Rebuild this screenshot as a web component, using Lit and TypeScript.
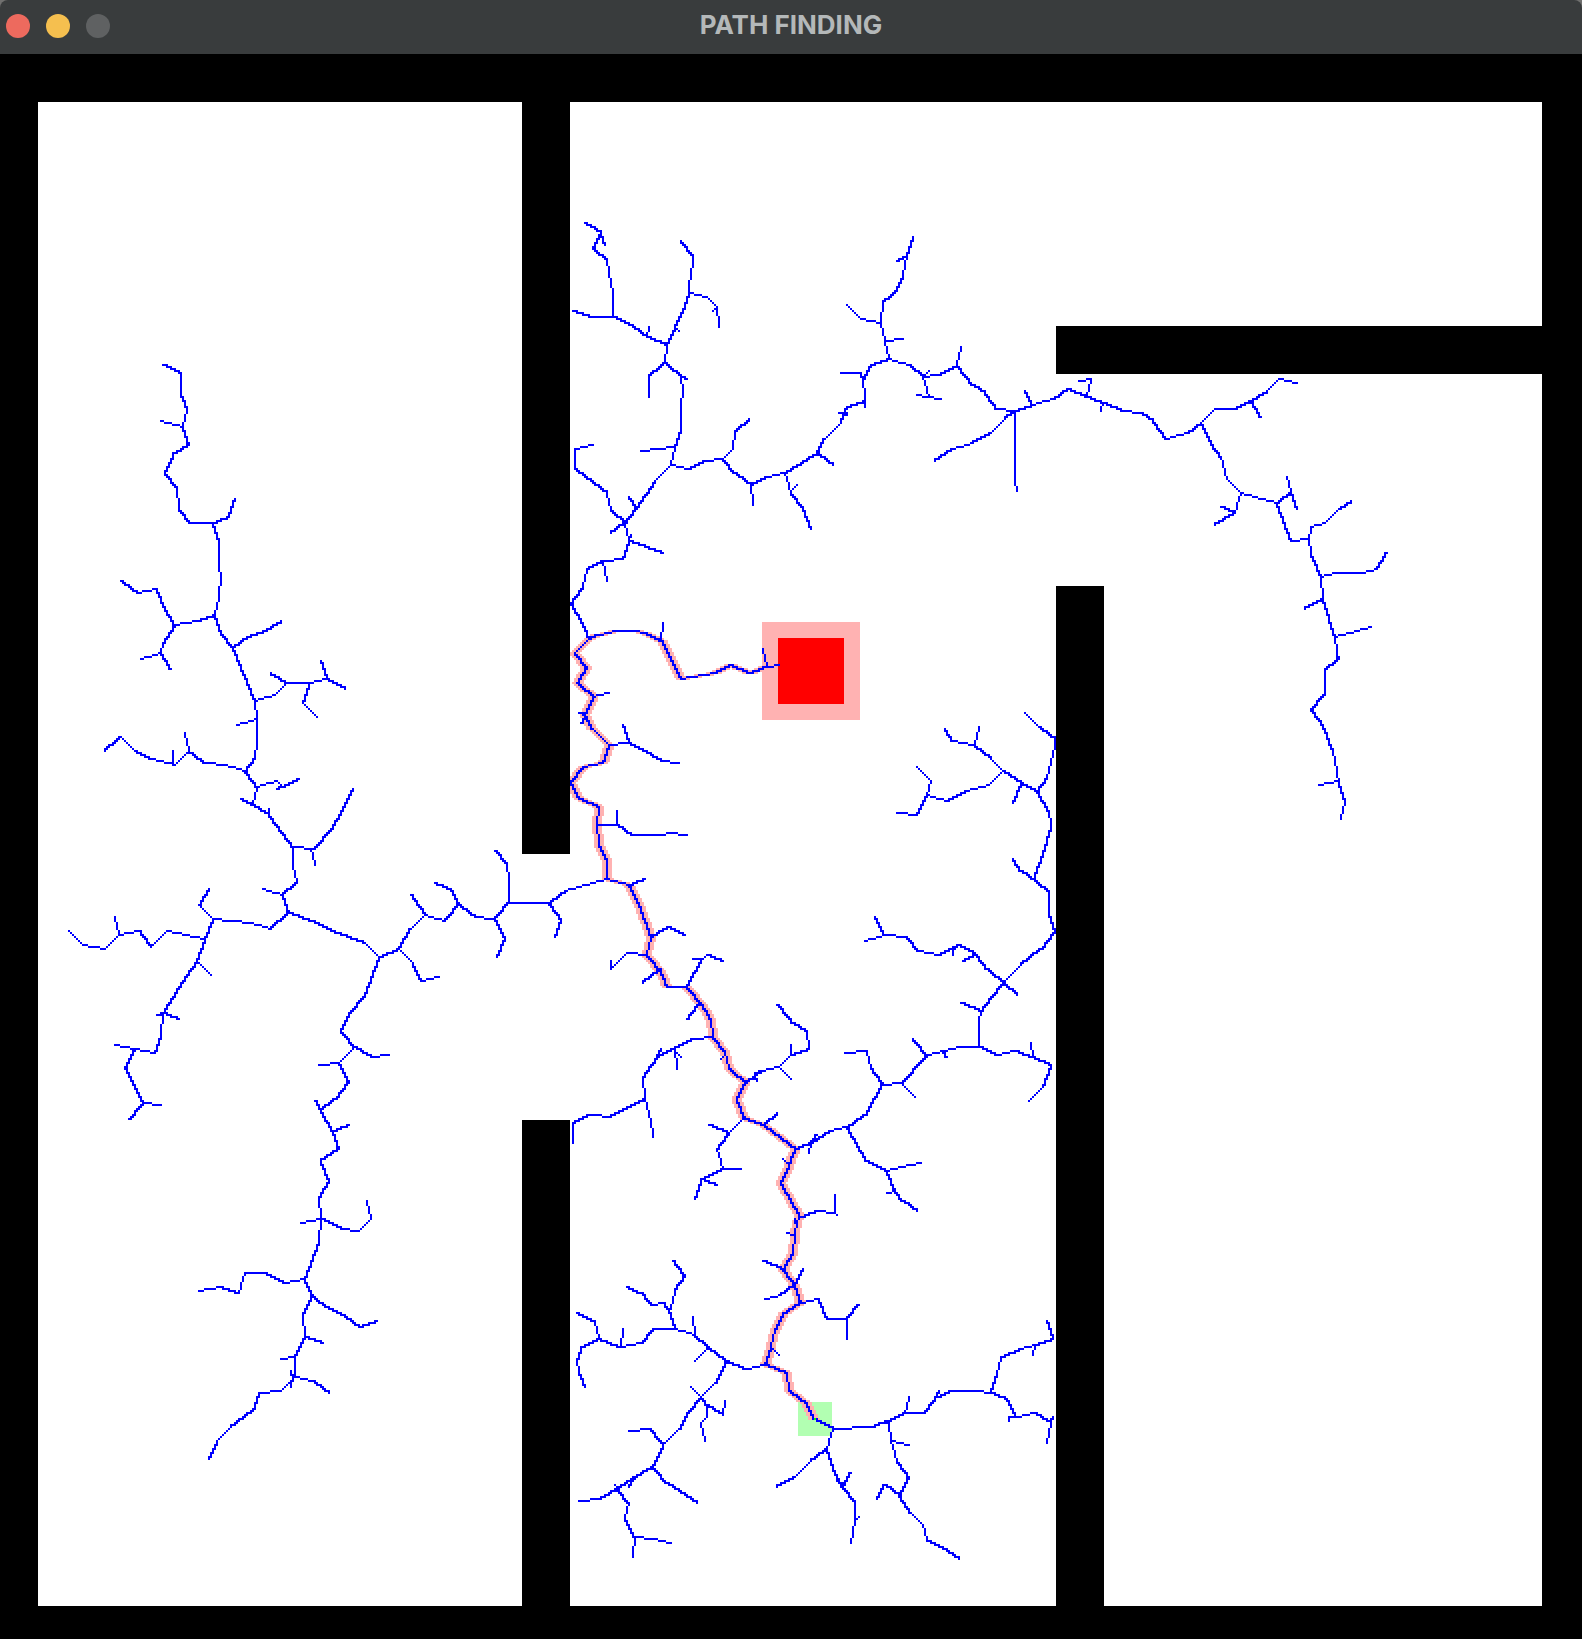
import { LitElement, html, svg, css } from "lit";
import { customElement, property } from "lit/decorators.js";

type Point = [number, number];

interface Tile {
  x: number;
  y: number;
  /** Units per pixel on each axis. */
  sx: number;
  sy: number;
  /** Branches of the tree, one per line, as "x,y x,y ...". */
  branches: string;
}

/** Side of one simulation cell, in scene units. */
const CELL = 2;

const TREE: Tile[] = [
  {
    x: 560, y: 210, sx: 3, sy: 3,
    branches: `
75,39 99,51 121,69 96,114 141,153 147,186 159,249 159,321
121,69 135,105
39,302 93,321 162,321 215,345 261,381 321,405
261,381 267,350
363,93 399,135 399,160 387,225 387,249 375,285 345,351 321,405 315,459
345,351 357,363
387,249 440,261 471,291 477,351
471,291 459,303
315,459 267,501 267,561
315,459 363,498 381,507
363,498 369,550 363,580 363,657 345,711 333,765
243,723 345,711
333,765 387,777 435,753 489,747 525,790 573,825 579,885
489,747 519,717 525,663 567,627
573,825 620,800 675,790 720,760 771,729 795,685 840,640 855,609 861,591 915,573
837,609 861,609 861,615
915,591 915,549 909,510 933,465 987,447
843,489 903,489 909,507
771,729 819,765
675,790 693,850 729,891 753,957
693,843 711,825
333,765 285,810 231,891 192,939
207,861 228,891
192,939 153,969
99,705 45,717 45,777 141,849 150,903 192,939
192,939 204,995 186,1045 129,1054 81,1077 66,1130 33,1179
204,989 210,975
204,995 309,1029
129,1054 141,1113`,
  },
  {
    x: 840, y: 220, sx: 3, sy: 3,
    branches: `
219,51 201,105 189,165 165,219 129,249 123,309 135,360 147,417
171,123 201,105 201,117
21,255 63,297 123,309
135,363 189,357
147,417 207,435 249,471 297,462 351,437 363,381
249,471 267,453
249,471 267,531
231,525 303,537
351,437 400,493 435,519 471,566 525,573
525,573 495,595 450,637 400,667 339,687 285,723
525,573 525,783 531,813
525,573 579,552 636,537 681,507 740,530 789,549 850,570 900,580 940,603 981,657
555,513 579,552
741,525 753,477 717,483
789,549 783,573`,
  },
  {
    x: 1050, y: 370, sx: 3, sy: 3,
    branches: `
351,207 408,186 453,161 493,117 553,117 600,93 650,60 685,27 741,39
600,93 633,141
453,161 495,237 513,261 531,327 573,369 681,399
573,369 552,427 495,465
513,411 552,427
681,399 721,363 711,321
721,363 741,417
681,399 720,513 777,507 783,471 825,460 865,416 903,393
777,507 783,549 813,621 819,684 855,800 861,850 867,865 825,903 825,969 780,1014 819,1062 849,1140 867,1237 885,1290 873,1347
813,621 860,609 938,607 978,598 1011,549
819,684 765,717
855,800 903,791 963,771
867,1234 807,1245`,
  },
  {
    x: 560, y: 590, sx: 3, sy: 3,
    branches: `
33,39 69,100 84,147
309,98 303,150
609,177 621,231
96,321 147,309
57,369 75,372
75,378 63,399
149,465 204,460 189,405
204,460 245,477 300,512 357,519
111,705 168,705 171,662
168,705 215,735 300,735 330,729 381,735
205,885 255,867
273,1040 321,1011 375,1034
258,1095 198,1089 153,1135 153,1113
300,1137 249,1179
381,1191 430,1107 438,1095 489,1113
399,1107 430,1107`,
  },
  {
    x: 780, y: 700, sx: 3, sy: 3,
    branches: `
735,39 777,78 825,117 825,140 813,190 798,230 771,270
495,87 520,123 579,132 630,175 669,211 720,250 771,270
597,81 582,132
411,201 453,243 441,285 501,300 560,273 627,252 669,211
441,285 411,345 351,339
720,250 699,309
771,270 807,330 813,380 789,460 765,525 762,540
699,477 720,512 762,543 807,579 807,640 825,690 780,745 720,795 669,846
285,651 312,703 255,723
312,703 378,712 417,752 477,765 531,736 582,760 620,805 669,846
525,740 519,765
582,763 549,783
669,846 711,885
669,846 630,888 603,930 597,965 597,1041
543,909 603,930
597,1041 651,1064 705,1052 755,1070 813,1095 789,1160 747,1203
753,1029 759,1070
597,1041 540,1041 490,1055 438,1065 363,1148 309,1155 273,1105 258,1053 195,1059
490,1055 501,1071
399,1017 438,1065
363,1148 405,1191`,
  },
  {
    x: 560, y: 940, sx: 3, sy: 3,
    branches: `
459,291 399,297 345,327 291,351 249,408 255,474 150,529 93,523 39,549 39,609
291,351 303,327
345,327 351,387
345,330 363,351
255,474 273,540 279,591
483,354 495,345
417,190 381,237
555,430 600,393 657,380 690,342 747,327 741,270 690,243 651,195
600,393 582,405 591,423
657,380 693,417
693,315 693,342
549,537 507,579 471,624 489,687 425,720 405,777
447,555 507,579
489,687 543,687
435,720 471,735
611,552 651,519
705,627 753,609 805,575 863,562 918,520 969,435
753,609 747,639
753,609 771,585
863,562 921,665 978,690 1003,750 1030,785 1071,813
978,690 1020,678 1083,669
1003,750 981,759
669,657 687,675
720,828 771,813 825,820 825,765
825,820 831,825
705,837 705,849
681,879 703,885
609,963 666,984
729,987 705,1035 660,1062 615,1077`,
  },
  {
    x: 560, y: 1240, sx: 3, sy: 3,
    branches: `
720,186 777,177 801,237 861,237 897,195
861,237 861,297
633,320 657,345
615,374 561,387 498,365 447,321 405,285 345,267 280,267 243,309 180,321 117,297 105,240 51,219
117,297 60,324 51,360 54,393 75,441
180,321 189,267
399,231 405,285
447,321 405,363
345,267 327,210 306,189 270,195 240,156 201,141
332,205 345,155 375,111 339,63
498,365 465,430 423,471 385,513 355,567 306,612 276,678 168,747 120,776 57,783
393,441 423,471 441,495 487,522 495,483
441,495 441,530 423,550 435,603
306,612 267,567 207,573
276,678 320,727 411,789
219,711 207,741
168,747 207,790 195,835 225,890 219,951
165,735 177,747
225,890 285,896 333,909
765,537 819,567 935,561 981,545 1035,519 1095,516 1131,471 1175,453 1255,453 1290,459 1341,477 1368,528 1425,519 1473,546 1463,609
1368,528 1347,531 1347,543
1473,546 1479,531
1290,459 1308,405 1323,351 1380,325 1425,315 1479,297 1461,243
1425,315 1419,345
1035,519 1047,471
1131,471 1137,453
819,567 801,627 825,700 849,740 885,785 885,840 873,909
801,627 750,660 702,711 651,741
831,723 849,735
849,740 873,699
885,840 897,831
981,545 987,555 993,603 1012,665 1047,711 1017,765
993,603 1047,615
951,777 975,737 1017,765 1053,821 1089,857 1098,905 1140,923 1197,957`,
  },
  {
    x: 50, y: 350, sx: 3, sy: 3,
    branches: `
339,45 393,69 393,130 411,177 396,231 417,285 370,315 345,371 381,411 387,475 423,519 487,519
333,213 396,231
487,519 537,501 555,447
487,519 507,570 507,650 513,680 507,740 495,792
213,693 261,729 321,717 345,775 375,825 440,810 495,792
375,825 339,878 333,909 273,927
333,909 363,957
495,792 510,848 546,888 590,860 645,843 693,813
546,888 615,1052 621,1107 621,1185 615,1219 585,1263
615,1052 675,1034 711,999 663,969
711,999 783,999 830,987 885,1017
830,987 813,933
777,1003 759,1059 801,1101
621,1107 561,1125
585,1263 525,1245 462,1238 417,1200 405,1149
417,1200 372,1244 300,1229 255,1200 210,1160 165,1203
369,1203 369,1244
585,1263 621,1309 679,1293 697,1309 747,1287
697,1309 681,1317
621,1309 606,1362
573,1347 606,1362 657,1393 730,1491 792,1497 840,1445 880,1380 909,1317
657,1377 657,1393`,
  },
  {
    x: 50, y: 780, sx: 2.613, sy: 3,
    branches: `
636,201 636,260 643,306 610,345 623,400 580,447 525,430 425,417 403,477 384,543
559,327 610,345
683,207 693,255
416,327 390,375 425,417
403,477 305,453 264,498 232,453 180,463 142,507 88,493 50,453
170,411 180,463
384,543 421,583
384,543 350,605 297,700 290,765 274,819 222,807 170,795
280,705 297,700 337,717
222,807 198,860 243,968 290,975
243,968 206,1017
623,400 680,420 750,460 825,490 860,529 913,507 945,447 982,405 1032,423 1071,377 1110,411 1162,417 1199,370 1305,370 1345,333 1455,297
982,405 944,345
1071,377 1050,324 1007,309
1162,417 1188,470 1168,531
1199,370 1199,290 1194,255 1162,213
1305,370 1336,415 1320,471
913,507 950,550 971,603 1017,591
860,529 825,645 780,697 762,755 799,801 838,830 887,825
799,801 757,849 703,855`,
  },
  {
    x: 180, y: 1040, sx: 3, sy: 3,
    branches: `
478,69 507,125 465,175 423,215 405,183
423,215 457,273 475,325 425,363 447,425 419,470 423,538 415,600 372,717 396,773
457,270 507,255
363,549 423,538 490,566 536,573 573,535 561,483
372,717 312,729 261,699 196,699 177,760 125,741 57,753
396,773 435,801 490,825 537,860 591,843
390,773 371,825 375,892 345,950 345,1011 303,1052 235,1059 217,1115 150,1160 108,1200 87,1257
375,892 429,909
345,950 303,957
345,1011 400,1021 447,1059
333,993 339,1011 333,1041`,
  },
];

/** The route that was found, from the target back to the start. */
const ROUTE: Tile = {
  x: 560, y: 590, sx: 3, sy: 3,
  branches: `657,225 621,231 570,247 513,225 465,247 360,266 303,150 255,130 225,123 172,123 117,132 84,147 45,186 81,228 48,276 96,321 75,372 100,415 149,465 129,519 66,533 33,573 57,625 117,650 111,705 117,760 141,810 141,867 205,885 237,940 273,1040 258,1095 300,1140 321,1191 381,1191 420,1240 453,1284 459,1341 495,1385 505,1435 555,1480 531,1527 557,1584 611,1602 705,1677 687,1725 663,1779 720,1878 711,1890 703,1935 699,1990 666,2034 705,2085 720,2136 670,2172 645,2215 633,2270 615,2324 678,2349 687,2403 740,2445 765,2487`,
};

function toCells(tile: Tile): Point[][] {
  return tile.branches
    .trim()
    .split("\n")
    .map((line) =>
      line.split(" ").map((pair): Point => {
        const [px, py] = pair.split(",").map(Number);
        return [
          Math.floor((tile.x + px / tile.sx) / CELL),
          Math.floor((tile.y + py / tile.sy) / CELL),
        ];
      }),
    );
}

/**
 * Bresenham line between two cells. Slanted lines also fill the corner of each
 * step; gentle slopes and exact diagonals stay one cell thick.
 */
function walk([x0, y0]: Point, [x1, y1]: Point): Point[] {
  const cells: Point[] = [];
  const dx = Math.abs(x1 - x0);
  const dy = -Math.abs(y1 - y0);
  const stepX = x0 < x1 ? 1 : -1;
  const stepY = y0 < y1 ? 1 : -1;
  const ratio = Math.min(dx, -dy) / Math.max(dx, -dy, 1);
  const fillCorners = ratio > 0.3 && ratio < 1;
  let error = dx + dy;
  for (;;) {
    cells.push([x0, y0]);
    if (x0 === x1 && y0 === y1) return cells;
    const twice = 2 * error;
    const moveX = twice >= dy;
    const moveY = twice <= dx;
    if (moveX && moveY && fillCorners) {
      cells.push(dx > -dy ? [x0 + stepX, y0] : [x0, y0 + stepY]);
    }
    if (moveX) {
      error += dy;
      x0 += stepX;
    }
    if (moveY) {
      error += dx;
      y0 += stepY;
    }
  }
}

/** Path data that fills every cell of the lines with a flat brush. */
function raster(lines: Point[][], reach = 0): string {
  const seen = new Set<string>();
  for (const line of lines) {
    for (let i = 1; i < line.length; i++) {
      for (const [x, y] of walk(line[i - 1], line[i])) {
        for (let k = -reach; k <= reach; k++) seen.add(`${(x + k) * CELL} ${y * CELL}`);
      }
    }
  }
  return [...seen].map((at) => `M${at}h${CELL}v${CELL}h-${CELL}z`).join("");
}

const treePath = raster([...TREE.flatMap(toCells), ...toCells(ROUTE)]);
const routePath = raster(toCells(ROUTE), 2);

const WALLS = [
  { x: 522, y: 102, w: 48, h: 752 },
  { x: 522, y: 1120, w: 48, h: 486 },
  { x: 1056, y: 326, w: 486, h: 48 },
  { x: 1056, y: 586, w: 48, h: 1020 },
];

@customElement("path-map")
export class PathMap extends LitElement {
  static styles = css`
    :host {
      display: block;
      background: #000;
    }
    .scene {
      display: block;
      width: 100%;
      height: auto;
      shape-rendering: crispEdges;
    }
    .floor { fill: #fff; }
    .wall { fill: #000; }
    .goal-zone, .route { fill: #ffb2b2; }
    .goal { fill: #f00; }
    .start-zone { fill: #b2ffb2; }
    .start { fill: #0f0; }
    .tree { fill: #00f; }
  `;

  render() {
    return html`
      <svg class="scene" viewBox="0 54 1582 1585" role="img" aria-label="Search tree and route">
        <rect class="floor" x="38" y="102" width="1504" height="1504"></rect>
        <rect class="goal-zone" x="762" y="622" width="98" height="98"></rect>
        <rect class="start-zone" x="798" y="1402" width="34" height="34"></rect>
        <path class="route" d=${routePath}></path>
        <rect class="goal" x="778" y="638" width="66" height="66"></rect>
        ${WALLS.map(
          (b) => svg`<rect class="wall" x=${b.x} y=${b.y} width=${b.w} height=${b.h}></rect>`,
        )}
        <path class="tree" d=${treePath}></path>
        <rect class="start" x="814" y="1418" width="2" height="2"></rect>
      </svg>
    `;
  }
}

@customElement("title-bar")
export class TitleBar extends LitElement {
  @property() heading = "";

  static styles = css`
    :host {
      display: block;
      background: #70706f;
    }
    .bar {
      display: grid;
      grid-template-columns: 1fr auto 1fr;
      align-items: center;
      height: 54px;
      padding: 0 6px 2px;
      box-sizing: border-box;
      background: #393c3d;
      border-radius: 8px 8px 0 0;
    }
    .controls {
      display: flex;
      gap: 16px;
    }
    .control {
      width: 24px;
      height: 24px;
      padding: 0;
      border: 0;
      border-radius: 50%;
    }
    .close { background: #ed6a5e; }
    .minimize { background: #f5bf4f; }
    .zoom { background: #5f6162; }
    .heading {
      margin: 0;
      padding-bottom: 2px;
      font: 700 26px/32px Inter, "Liberation Sans", sans-serif;
      color: #b4b8b9;
    }
  `;

  render() {
    return html`
      <header class="bar">
        <div class="controls">
          <button class="control close" aria-label="Close"></button>
          <button class="control minimize" aria-label="Minimize"></button>
          <button class="control zoom" aria-label="Zoom" disabled></button>
        </div>
        <h1 class="heading">${this.heading}</h1>
      </header>
    `;
  }
}

@customElement("app-root")
export class AppRoot extends LitElement {
  static styles = css`
    :host {
      display: block;
      min-height: 100vh;
      background: #000;
    }
  `;

  render() {
    return html`
      <title-bar heading="PATH FINDING"></title-bar>
      <path-map></path-map>
    `;
  }
}
